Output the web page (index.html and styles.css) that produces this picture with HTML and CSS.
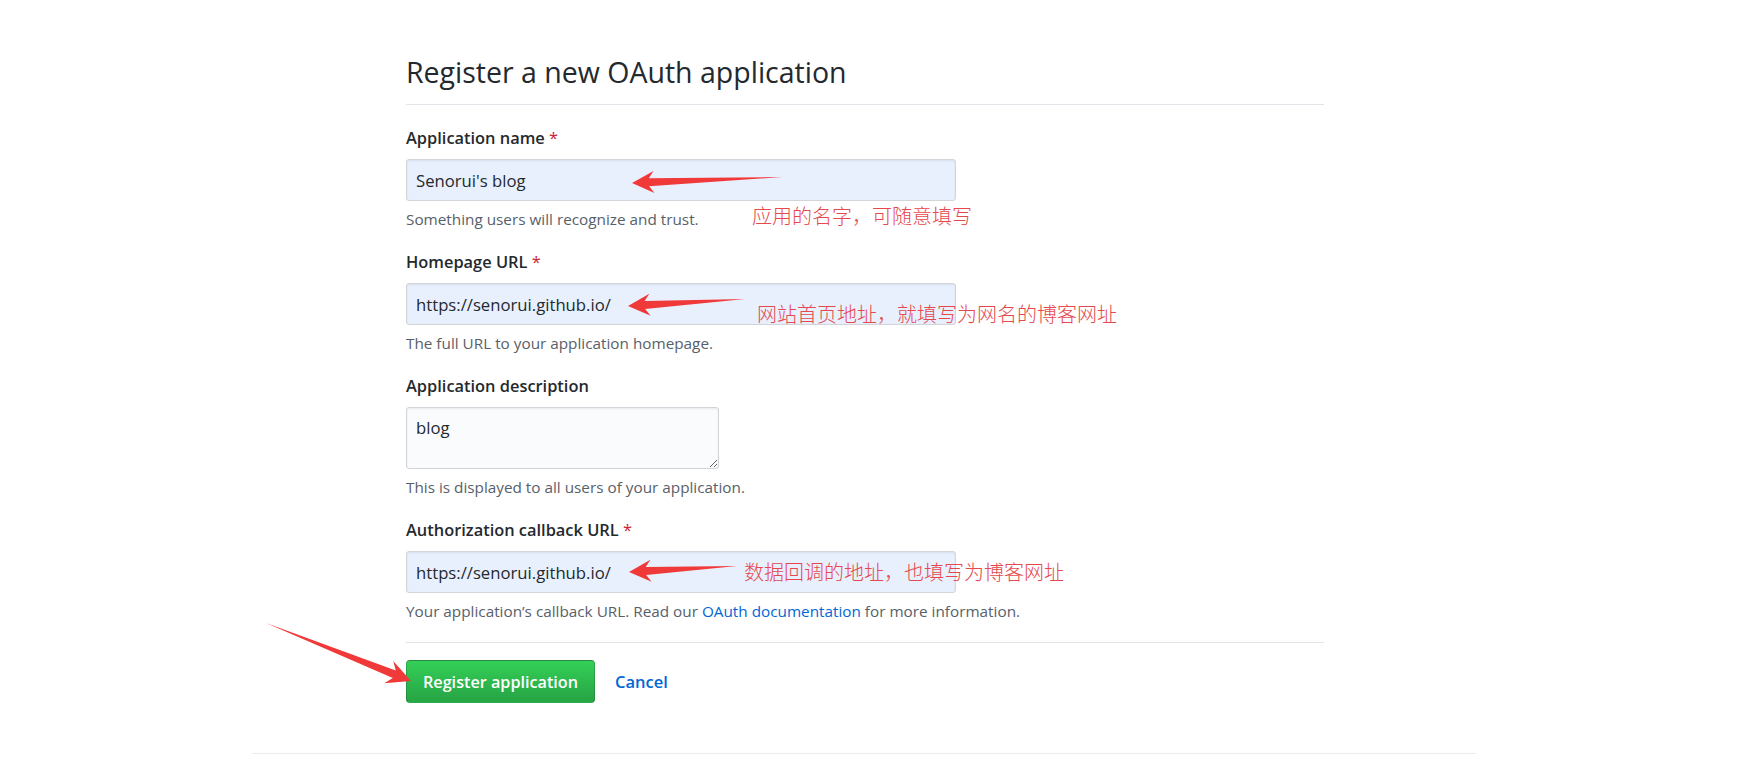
FILE: index.html
```html
<!DOCTYPE html>
<html lang="en">
<head>
<meta charset="utf-8">
<title>Register a new OAuth application</title>
<link rel="stylesheet" href="styles.css">
</head>
<body>
<div class="page">
  <div class="main">
    <div class="subhead">
      <h2 class="subhead-heading">Register a new OAuth application</h2>
    </div>
    <form class="form">
      <div class="form-group">
        <label class="label">Application name <span class="req">*</span></label>
        <input class="form-control autofill" type="text" value="Senorui's blog">
        <p class="note">Something users will recognize and trust.</p>
      </div>
      <div class="form-group">
        <label class="label">Homepage URL <span class="req">*</span></label>
        <input class="form-control autofill" type="text" value="https://senorui.github.io/">
        <p class="note">The full URL to your application homepage.</p>
      </div>
      <div class="form-group">
        <label class="label">Application description</label>
        <textarea class="form-control textarea">blog</textarea>
        <p class="note">This is displayed to all users of your application.</p>
      </div>
      <div class="form-group">
        <label class="label">Authorization callback URL <span class="req">*</span></label>
        <input class="form-control autofill" type="text" value="https://senorui.github.io/">
        <p class="note">Your application’s callback URL. Read our <a class="link" href="#">OAuth documentation</a> for more information.</p>
      </div>
      <div class="form-actions">
        <button class="btn-primary" type="button">Register application</button>
        <a class="btn-link" href="#">Cancel</a>
      </div>
    </form>
  </div>
  <div class="footer-rule"></div>
</div>

<div class="annot annot-1">应用的名字，可随意填写</div>
<div class="annot annot-2">网站首页地址，就填写为网名的博客网址</div>
<div class="annot annot-3">数据回调的地址，也填写为博客网址</div>

<svg class="arrows" width="1759" height="774" viewBox="0 0 1759 774">
  <polygon points="632,183 653.5,171.1 648.8,178.3 782,177 649.2,186.3 654.4,193.1"/>
  <polygon points="628,306 649.3,293.7 644.7,301 745,299 645.2,309 650.6,315.7"/>
  <polygon points="629,572 650.4,559.8 645.7,567.1 737,566 646.2,575 651.6,581.8"/>
  <polygon points="411,681 384.3,683.2 392.8,678 266,623 395.8,670.6 393.2,660.9"/>
</svg>
</body>
</html>
```

FILE: styles.css
```css
* { box-sizing: border-box; }

html, body {
  margin: 0;
  padding: 0;
  background: #ffffff;
}

body {
  position: relative;
  width: 1759px;
  height: 774px;
  overflow: hidden;
  font-family: "Open Sans", "Noto Sans", "Liberation Sans", sans-serif;
  color: #24292e;
}

.page {
  margin-left: 252px;
  width: 1224px;
  padding-top: 53px;
}

.main {
  margin-left: 154px;
  width: 918px;
}

.subhead {
  padding-bottom: 12px;
  border-bottom: 1px solid #e1e4e8;
}

.subhead-heading {
  margin: 0;
  font-size: 28.5px;
  line-height: 39px;
  font-weight: 400;
  color: #24292e;
}

.form {
  display: flex;
  flex-direction: column;
  padding-top: 1px;
}

.form-group {
  display: flex;
  flex-direction: column;
  align-items: flex-start;
  margin-top: 21px;
}

.label {
  display: block;
  font-size: 16.4px;
  line-height: 22px;
  font-weight: 600;
  color: #24292e;
  margin-bottom: 10px;
}

.req {
  color: #cb2431;
  font-weight: 400;
}

.form-control {
  font-family: "Open Sans", "Noto Sans", "Liberation Sans", sans-serif;
  font-size: 16.7px;
  color: #24292e;
  border: 1px solid #d1d5da;
  border-radius: 3px;
  box-shadow: inset 0 1px 2px rgba(27, 31, 35, 0.075);
  outline: none;
  margin: 0;
}

.autofill {
  width: 550px;
  height: 42px;
  padding: 0 9px;
  background: #e8f0fe;
  line-height: 22px;
}

.textarea {
  width: 313px;
  height: 62px;
  padding: 9px 9px 5px;
  background: #fafbfc;
  line-height: 22px;
  resize: vertical;
}

.note {
  margin: 8px 0 0;
  font-size: 15.3px;
  line-height: 21px;
  color: #586069;
}

.link {
  color: #0366d6;
  text-decoration: none;
}

.form-actions {
  display: flex;
  align-items: center;
  margin-top: 20px;
  padding-top: 17px;
  border-top: 1px solid #e1e4e8;
}

.btn-primary {
  height: 43px;
  width: 189px;
  padding: 0;
  font-family: "Open Sans", "Noto Sans", "Liberation Sans", sans-serif;
  font-size: 16.2px;
  font-weight: 600;
  color: #ffffff;
  background: linear-gradient(-180deg, #34d058 0%, #28a745 90%);
  border: 1px solid rgba(27, 31, 35, 0.2);
  border-radius: 4px;
  cursor: pointer;
}

.btn-link {
  margin-left: 20px;
  font-size: 16.5px;
  font-weight: 600;
  color: #0366d6;
  text-decoration: none;
}

.footer-rule {
  margin-top: 50px;
  border-top: 1px solid #eaecef;
}

.annot {
  position: absolute;
  font-family: "Noto Sans CJK SC", "Noto Sans", sans-serif;
  font-size: 20px;
  line-height: 24px;
  font-weight: 300;
  color: #e5484d;
  white-space: nowrap;
}

.annot-1 { left: 752px; top: 204px; }
.annot-2 { left: 757px; top: 302px; }
.annot-3 { left: 744px; top: 560px; }

.arrows {
  position: absolute;
  left: 0;
  top: 0;
  pointer-events: none;
}

.arrows polygon {
  fill: #f03a3a;
}
```
